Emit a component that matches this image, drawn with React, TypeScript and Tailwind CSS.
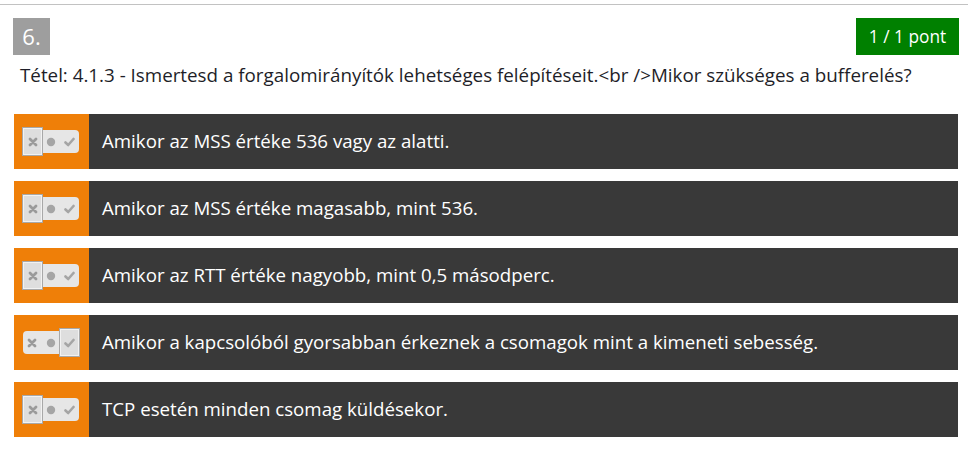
import React from "react";

const answers = [
  { text: "Amikor az MSS értéke 536 vagy az alatti.", sel: 0 },
  { text: "Amikor az MSS értéke magasabb, mint 536.", sel: 0 },
  { text: "Amikor az RTT értéke nagyobb, mint 0,5 másodperc.", sel: 0 },
  { text: "Amikor a kapcsolóból gyorsabban érkeznek a csomagok mint a kimeneti sebesség.", sel: 2 },
  { text: "TCP esetén minden csomag küldésekor.", sel: 0 },
];

function XIcon() {
  return (
    <svg width="10" height="10" viewBox="0 0 10 10">
      <path d="M2 2 L8 8 M8 2 L2 8" stroke="#9a9a9a" strokeWidth="2.8" strokeLinecap="round" />
    </svg>
  );
}
function Dot() {
  return (
    <svg width="10" height="10" viewBox="0 0 10 10">
      <circle cx="5" cy="5" r="4.2" fill="#a5a5a5" />
    </svg>
  );
}
function Check() {
  return (
    <svg width="11" height="10" viewBox="0 0 11 10">
      <path d="M1.5 5.5 L4.2 8 L9.5 2" stroke="#a5a5a5" strokeWidth="2.6" fill="none" strokeLinecap="round" strokeLinejoin="round" />
    </svg>
  );
}

function Toggle({ sel }: { sel: number }) {
  const icons = [<XIcon key="x" />, <Dot key="d" />, <Check key="c" />];
  return (
    <div className="relative flex h-[23px] w-[56px] items-center rounded-[4px] bg-[#e6e6e6]">
      {icons.map((ic, i) => (
        <div key={i} className="flex h-full flex-1 items-center justify-center">
          {ic}
        </div>
      ))}
      <div
        className={
          "absolute top-[-2px] flex h-[27px] w-[19px] items-center justify-center border border-[#f2f2f2] bg-[#dedede] shadow-[0_0_0_1px_#a8a8a8] " +
          (sel === 0 ? "left-0" : sel === 1 ? "left-[18px]" : "left-[37px]")
        }
      >
        {icons[sel]}
      </div>
    </div>
  );
}

export default function App() {
  return (
    <div className="h-[460px] w-[968px] bg-white" style={{ fontFamily: "'Open Sans', 'Noto Sans', sans-serif" }}>
      <div className="h-[4px]" />
      <div className="border-t border-[#c2c2c2]">
        <div className="flex items-start justify-between pl-[13px] pr-[9px] pt-[13px]">
          <div className="flex h-[37px] w-[37px] items-center justify-center bg-[#9e9e9e] text-[22px] text-white">
            6.
          </div>
          <div className="flex h-[37px] w-[103px] items-center justify-center bg-[#008000] text-[17.3px] text-white">
            1 / 1 pont
          </div>
        </div>
        <div className="mt-[7px] h-[26px] pl-[20px] text-[18.8px] leading-[26px] text-[#1e1e28]">
          Tétel: 4.1.3 - Ismertesd a forgalomirányítók lehetséges felépítéseit.&lt;br /&gt;Mikor szükséges a bufferelés?
        </div>
        <div className="ml-[14px] mr-[10px] mt-[26px] flex flex-col gap-[12px]">
          {answers.map((a, i) => (
            <div key={i} className="flex h-[55px] bg-[#393939]">
              <div className="flex w-[75px] items-center bg-[#ef7f08] pl-[9px]">
                <Toggle sel={a.sel} />
              </div>
              <div className="flex items-center pl-[13px] text-[18.7px] text-white">{a.text}</div>
            </div>
          ))}
        </div>
      </div>
    </div>
  );
}
